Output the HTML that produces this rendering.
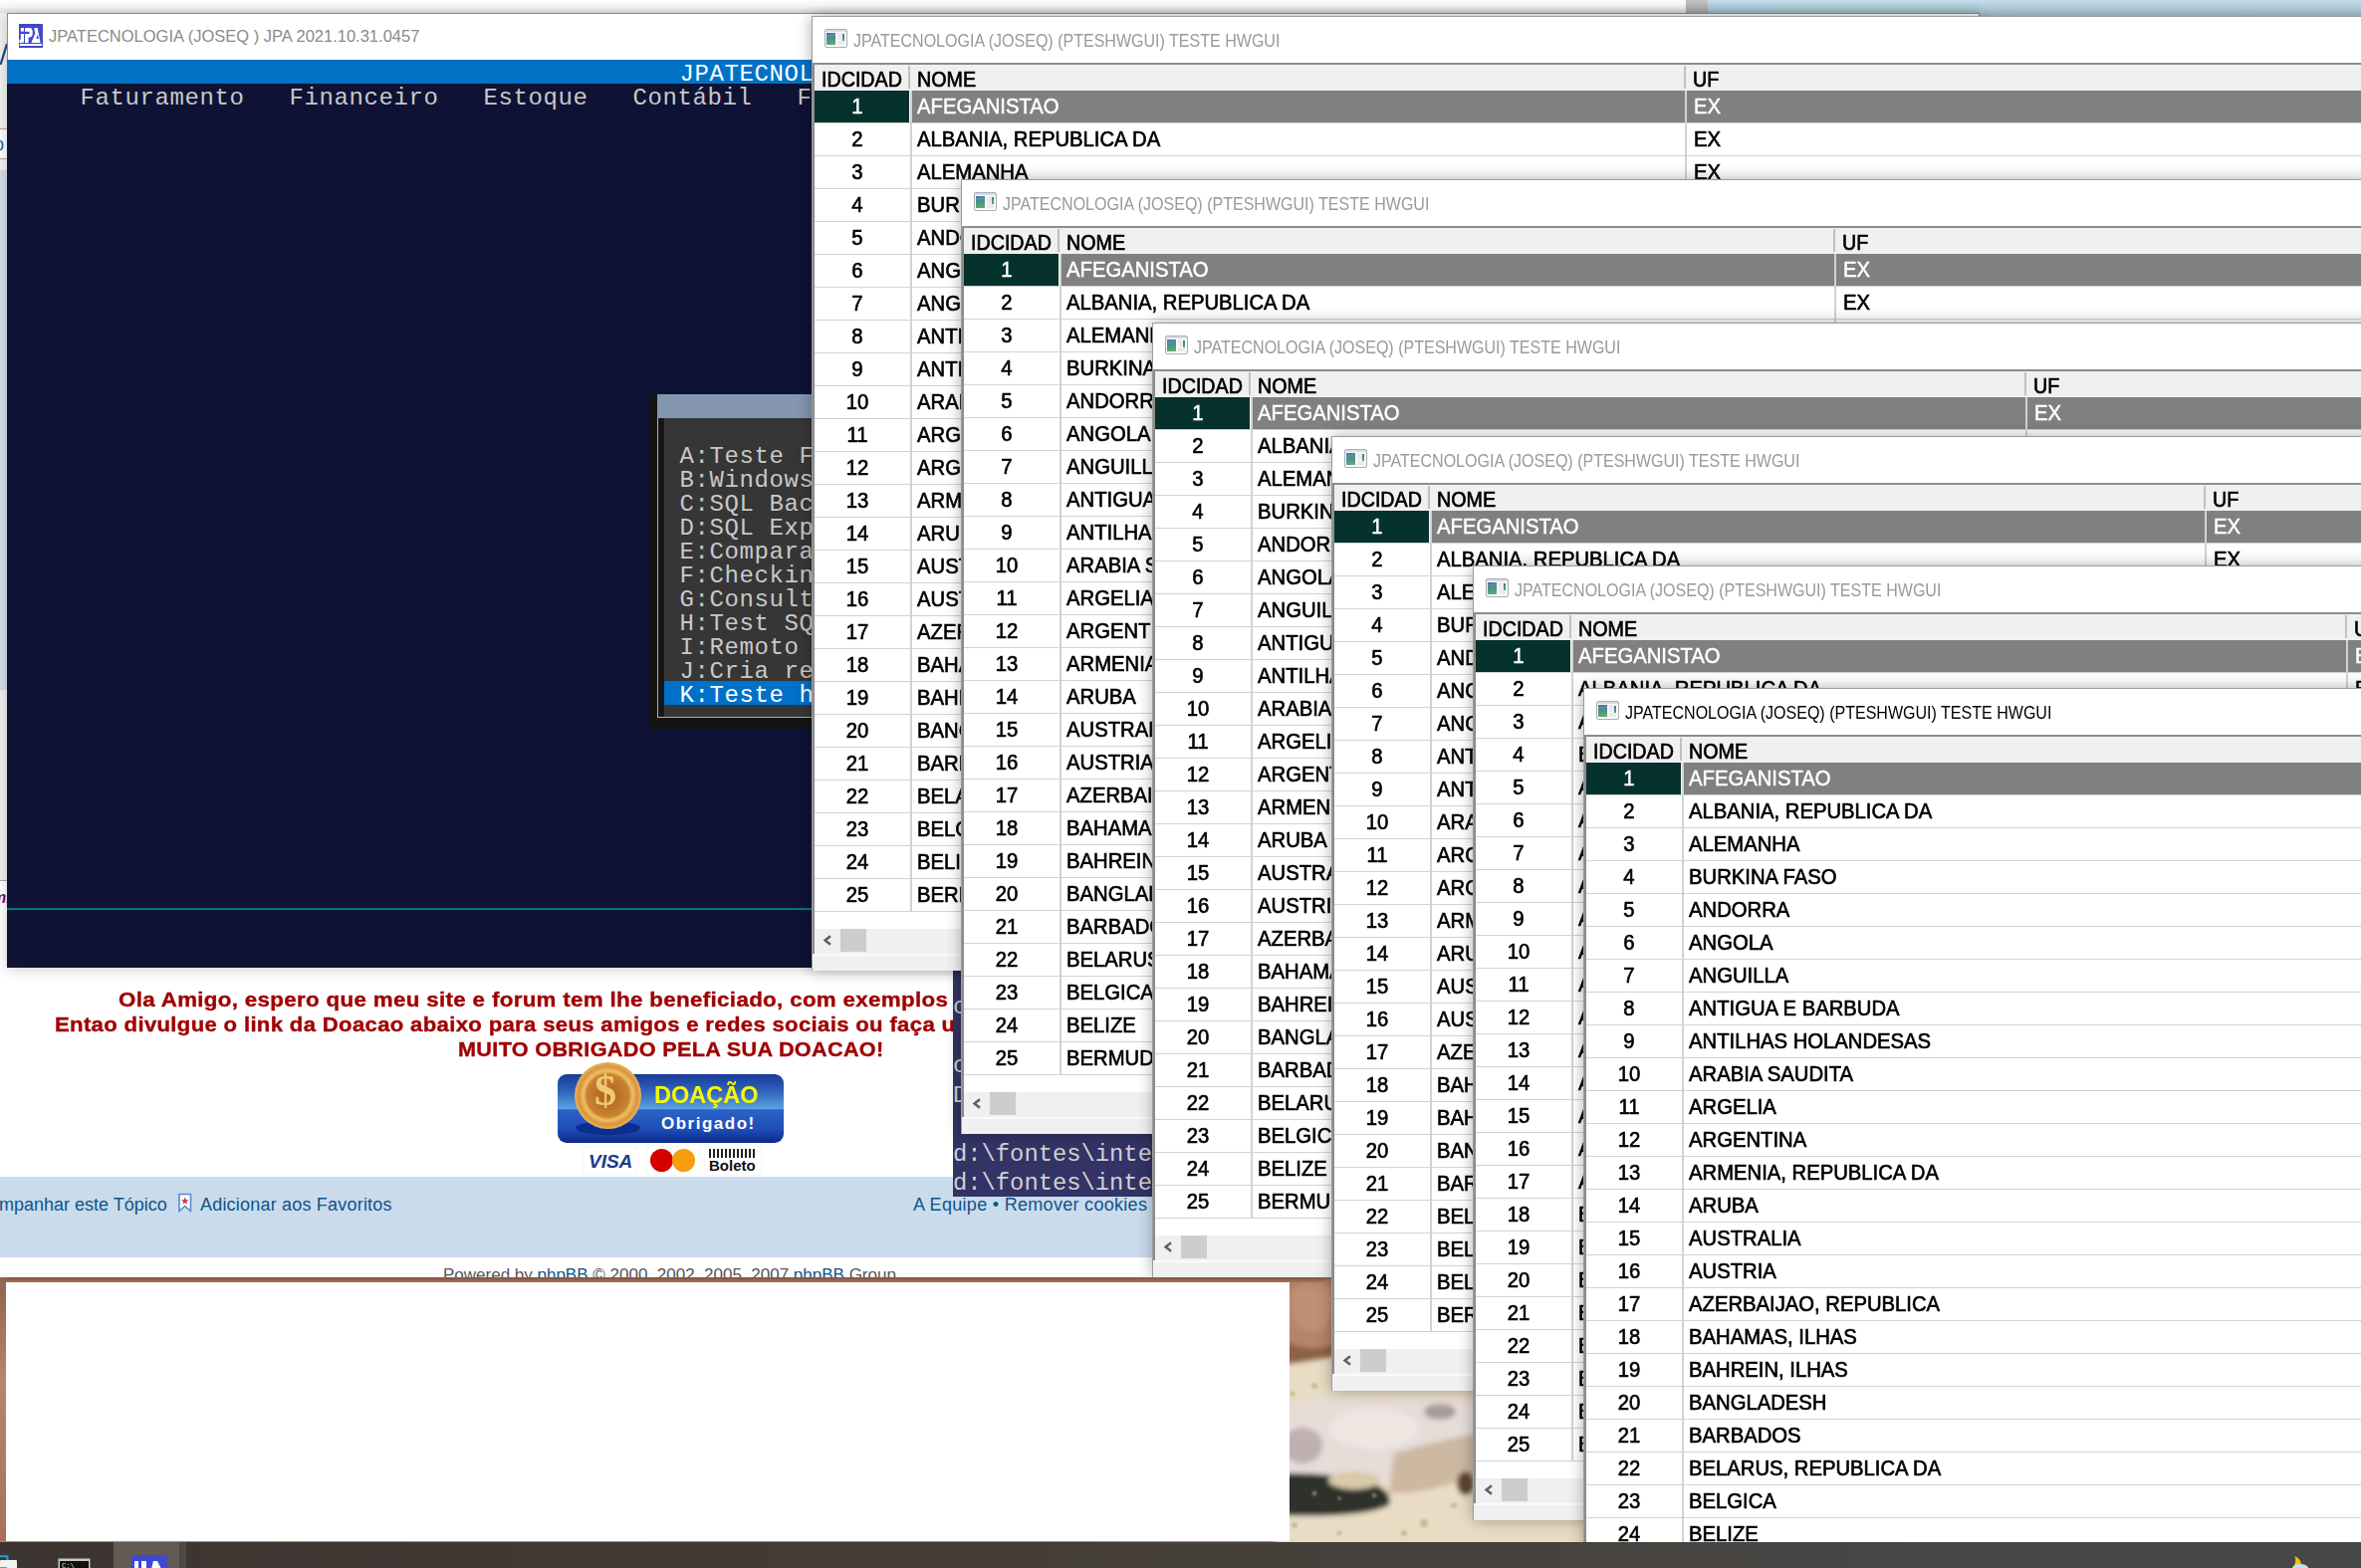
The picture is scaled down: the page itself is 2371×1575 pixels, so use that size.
<!DOCTYPE html><html><head><meta charset="utf-8"><style>
*{margin:0;padding:0;box-sizing:border-box}
html,body{width:2371px;height:1575px;overflow:hidden;background:#f4f4f4}
body{position:relative;font-family:"Liberation Sans",sans-serif}
.a{position:absolute}
.mono{font-family:"Liberation Mono",monospace}
.win{position:absolute;overflow:hidden;background:#f0f0f0}
.win .tb{position:absolute;left:1px;top:1px;right:0;height:46px;background:#fff}
.win .bl{position:absolute;left:0;top:0;width:1px;bottom:0;background:#9c9c9c}
.win .bt{position:absolute;left:0;top:0;height:1px;right:0;background:#9c9c9c}
.win .ttl{position:absolute;left:42px;top:16.5px;font-size:17.5px;line-height:17.5px;color:#9a9a9a;white-space:nowrap;transform:scaleX(0.916);transform-origin:0 0}
.win.act .ttl{color:#000}
.ico{position:absolute;left:12.7px;top:13px;width:23px;height:18.5px;border:1px solid #a9adb4;border-radius:2px;background:linear-gradient(#d8dce4 0,#d8dce4 2px,#fafafa 2px)}
.ico i{position:absolute;left:1.7px;top:3px;width:9px;height:11.6px;background:linear-gradient(170deg,#3d6aa8 0%,#5d90a8 25%,#4a8c8a 40%,#58a078 75%,#62b070 100%)}
.ico u{position:absolute;left:12.5px;top:3px;width:5px;height:6.5px;background:#ebebeb}
.ico s{position:absolute;left:12.5px;top:10.5px;width:7px;height:4px;background:#ebebeb}
.ico b{position:absolute;left:17.3px;top:3.5px;width:1.7px;height:7.5px;background:linear-gradient(#4070c0,#50b050)}
.tbl{position:absolute;left:1px;top:47px;right:0;height:895px;background:#fff;border-top:2px solid #8c8c8c;border-left:2px solid #8c8c8c}
.hdr{position:absolute;left:0;top:0;right:0;height:26px;background:#f0f0f0}
.ht{position:absolute;top:5.2px;font-size:21.5px;line-height:21.5px;color:#000;-webkit-text-stroke:0.7px #000;white-space:nowrap;transform:scaleX(0.915);transform-origin:0 0}
.hs{position:absolute;top:1px;width:2px;height:23px;background:#c0c0c0}
.row{position:absolute;left:0;right:0;height:33px;border-bottom:1px solid #d2d2d2}
.row .id{position:absolute;left:0;width:86px;top:0;height:32px;text-align:center}
.row .nm{position:absolute;left:102.5px;top:0;white-space:nowrap}
.row .uf{position:absolute;left:882.5px;top:0}
.row span{font-size:21.5px;line-height:21.5px;display:block;padding-top:5.5px;color:#000;-webkit-text-stroke:0.65px #000;transform:scaleX(0.942);transform-origin:0 0}
.row .id span{transform-origin:50% 0}
.row .vs{position:absolute;left:95.5px;top:0;width:2px;height:33px;background:#d2d2d2}
.row .vs2{position:absolute;left:874px;top:0;width:2px;height:33px;background:#d2d2d2}
.row.sel .c1{position:absolute;left:0;top:0;width:95px;height:32px;background:#06322d}
.row.sel .c2{position:absolute;left:97.5px;top:0;right:0;height:32px;background:#808080}
.row.sel span{color:#fff;-webkit-text-stroke:0.5px #fff}
.sb{position:absolute;left:0;right:0;top:868px;height:25px;background:#f0f0f0}
.sb .th{position:absolute;left:26px;top:0;width:26px;height:23px;background:#cdcdcd}
.sb .ar{position:absolute;left:8.3px;top:6px;width:10px;height:11px}
</style></head><body><div class="a" style="left:0;top:0;width:2371px;height:1575px;z-index:0;background:#b98564">
<svg width="2371" height="1575" style="position:absolute;left:0;top:0">
<defs>
<radialGradient id="rock" cx="0.45" cy="0.45" r="0.6"><stop offset="0" stop-color="#efe6de"/><stop offset="0.7" stop-color="#d9cfc6"/><stop offset="1" stop-color="#b8aca4"/></radialGradient>
<linearGradient id="sky" x1="0" y1="0" x2="0" y2="1"><stop offset="0" stop-color="#c2dde9"/><stop offset="1" stop-color="#a9c6d3"/></linearGradient>
</defs>

<rect x="1700" y="0" width="671" height="16" fill="url(#sky)"/>
<rect x="0" y="1283" width="1600" height="265" fill="#b98462"/>
<filter id="bl"><feGaussianBlur stdDeviation="2.5"/></filter>
<filter id="bl2"><feGaussianBlur stdDeviation="1.2"/></filter>
<g filter="url(#bl)">
<rect x="1280" y="1283" width="330" height="100" fill="#b6846a"/>
<ellipse cx="1318" cy="1310" rx="22" ry="28" fill="#c08f74"/>
<path d="M1285 1345 Q1315 1360 1340 1350 L1340 1378 L1285 1380Z" fill="#8e6244"/>
<path d="M1280 1372 Q1315 1368 1345 1362 L1610 1385 L1610 1560 L1280 1560Z" fill="#e9dcc4"/>
<path d="M1284 1412 Q1330 1400 1390 1405 Q1450 1402 1485 1410 L1485 1450 Q1460 1470 1430 1480 Q1380 1495 1340 1495 L1284 1492Z" fill="#e6dcd8"/>
<path d="M1400 1460 Q1450 1445 1485 1440 L1485 1480 Q1440 1500 1395 1500Z" fill="#cdb8a2"/>
<ellipse cx="1446" cy="1418" rx="16" ry="8" fill="#a59c9c"/>
<ellipse cx="1308" cy="1452" rx="20" ry="18" fill="#bfb0b2"/>
<ellipse cx="1380" cy="1435" rx="45" ry="20" fill="#efe6e2"/>
<path d="M1284 1480 Q1330 1478 1370 1488 Q1400 1495 1395 1512 Q1370 1525 1284 1522Z" fill="#2d322c"/>
<ellipse cx="1360" cy="1487" rx="26" ry="9" fill="#d9caa8"/>
<ellipse cx="1472" cy="1490" rx="9" ry="12" fill="#5e4434"/>
</g>
<g filter="url(#bl2)" fill="#c4b290" opacity=".8">
<circle cx="1300" cy="1532" r="3"/><circle cx="1430" cy="1530" r="4"/><circle cx="1460" cy="1512" r="3"/><circle cx="1320" cy="1392" r="3"/><circle cx="1298" cy="1400" r="2.5"/><circle cx="1345" cy="1540" r="2.5"/><circle cx="1410" cy="1540" r="3"/>
</g>
<g filter="url(#bl2)" fill="#8c9a80" opacity=".7"><circle cx="1320" cy="1500" r="2.5"/><circle cx="1345" cy="1505" r="2"/><circle cx="1380" cy="1502" r="2.5"/></g>
</svg></div>
<div class="a" style="left:0;top:0;width:1988px;height:1283px;z-index:1;background:#fff;overflow:hidden">
<div class="a" style="left:0;top:0;width:1693px;height:13px;background:linear-gradient(#fefefe 0%,#f6f6f6 50%,#dedede 100%)"></div>
<div class="a" style="left:1693px;top:0;width:22px;height:13px;background:linear-gradient(#c4c4c4,#a8a8a8)"></div>
<div class="a" style="left:1715px;top:0;width:280px;height:13px;background:linear-gradient(#c3dde9,#a6c3d0)"></div>
<div class="a" style="left:0;top:13px;width:7px;height:116px;background:#f1f1f1"></div>
<div class="a" style="left:0;top:129px;width:7px;height:1px;background:#aaa"></div>
<div class="a" style="left:0;top:159px;width:7px;height:1px;background:#aaa"></div>
<svg class="a" style="left:0;top:40px" width="8" height="30"><path d="M7 4 L0.5 25" stroke="#1c4a8c" stroke-width="2.2"/></svg>
<div class="a" style="left:-6px;top:136px;font-size:18px;line-height:18px;color:#2060b0">p</div>
<div class="a" style="left:0;top:160px;width:7px;height:11px;background:#f1f1f1"></div>
<div class="a" style="left:0;top:171px;width:7px;height:522px;background:#d3dde6"></div>
<div class="a" style="left:0;top:693px;width:7px;height:191px;background:#f0f0f0"></div>
<div class="a" style="left:0;top:884px;width:7px;height:1px;background:#aaa"></div>
<div class="a" style="left:-8px;top:894px;font-size:16px;line-height:16px;font-weight:bold;font-style:italic;color:#7a1080">mn</div>
<div class="a" style="left:119.3px;top:994.45px;font-size:20.5px;line-height:20.5px;font-weight:bold;color:#a00000;white-space:nowrap;letter-spacing:0.3px;-webkit-text-stroke:0.35px #a00000;transform:scaleX(1.0896);transform-origin:0 0">Ola Amigo, espero que meu site e forum tem lhe beneficiado, com exemplos de codigos</div>
<div class="a" style="left:55.4px;top:1018.65px;font-size:20.5px;line-height:20.5px;font-weight:bold;color:#a00000;white-space:nowrap;letter-spacing:0.3px;-webkit-text-stroke:0.35px #a00000;transform:scaleX(1.0795);transform-origin:0 0">Entao divulgue o link da Doacao abaixo para seus amigos e redes sociais ou faça uma doacao</div>
<div class="a" style="left:460px;top:1044px;font-size:20.5px;line-height:20.5px;font-weight:bold;color:#a00000;white-space:nowrap;letter-spacing:0.3px;-webkit-text-stroke:0.35px #a00000;transform:scaleX(1.056);transform-origin:0 0">MUITO OBRIGADO PELA SUA DOACAO!</div>
<!-- donate button -->
<div class="a" style="left:560px;top:1079px;width:227px;height:69px;border-radius:9px;background:linear-gradient(#173a98 0%,#2f63bb 25%,#5aa0e0 50%,#2c62c6 52%,#1e4fb8 80%,#0a2888 100%)"></div>
<div class="a" style="left:578px;top:1126px;width:65px;height:14px;border-radius:50%;background:#0a2a8c;opacity:.9"></div>
<div class="a" style="left:577px;top:1067px;width:67px;height:67px;border-radius:50%;background:radial-gradient(circle at 50% 50%,#a8621c 0,#c88232 45%,#f0c060 52%,#d89440 62%,#f8d878 80%,#c08030 100%)"></div>
<div class="a" style="left:597px;top:1074px;font-size:44px;line-height:44px;font-weight:bold;color:#f0c878;font-family:'Liberation Serif',serif">$</div>
<div class="a" style="left:657px;top:1087.5px;font-size:24.5px;line-height:24.5px;font-weight:bold;color:#f8f800;letter-spacing:0px;transform:scaleX(0.96);transform-origin:0 0">DOAÇÃO</div>
<div class="a" style="left:664px;top:1119.5px;font-size:17px;line-height:17px;font-weight:bold;color:#fff;letter-spacing:1.5px">Obrigado!</div>
<div class="a" style="left:586px;top:1152px;width:54px;height:28px;background:#fff;border-radius:3px;box-shadow:0 0 1px #bbb"></div>
<div class="a" style="left:591px;top:1157px;font-size:19px;line-height:19px;font-weight:bold;font-style:italic;color:#1a3a8c">VISA</div>
<div class="a" style="left:650px;top:1152px;width:53px;height:28px;background:#fff;border-radius:3px;box-shadow:0 0 1px #bbb"></div>
<div class="a" style="left:653px;top:1154px;width:23px;height:23px;border-radius:50%;background:#d40000"></div>
<div class="a" style="left:675px;top:1154px;width:23px;height:23px;border-radius:50%;background:#f89c10"></div>
<div class="a" style="left:708px;top:1152px;width:56px;height:28px;background:#fff;border-radius:3px;box-shadow:0 0 1px #bbb"></div>
<div class="a" style="left:712px;top:1154px;width:48px;height:9px;background:repeating-linear-gradient(90deg,#222 0 2px,#fff 2px 4px)"></div>
<div class="a" style="left:712px;top:1163px;font-size:15px;line-height:15px;font-weight:bold;color:#111">Boleto</div>
<!-- footer bar -->
<div class="a" style="left:0;top:1182px;width:1990px;height:81px;background:#cadcec"></div>
<div class="a" style="left:-1px;top:1201px;font-size:18px;line-height:18px;color:#105289;white-space:nowrap;letter-spacing:0px">mpanhar este Tópico</div>
<svg class="a" style="left:178px;top:1198px" width="16" height="20"><path d="M2 1.5H13.5V18.5L7.75 13.5L2 18.5Z" fill="#fff" stroke="#5a8ad0" stroke-width="1.6"/><path d="M7.75 4.5L8.8 7.3H11.6L9.3 9L10.2 11.8L7.75 10.1L5.3 11.8L6.2 9L3.9 7.3H6.7Z" fill="#c83048"/></svg>
<div class="a" style="left:201px;top:1201px;font-size:18px;line-height:18px;color:#105289;white-space:nowrap;letter-spacing:0.2px">Adicionar aos Favoritos</div>
<div class="a" style="left:917px;top:1200.5px;font-size:18px;line-height:18px;color:#105289;white-space:nowrap;letter-spacing:0.3px">A Equipe • Remover cookies</div>
<div class="a" style="left:445px;top:1271.5px;font-size:17px;line-height:17px;color:#555;white-space:nowrap">Powered by <span style="color:#105289">phpBB</span> © 2000, 2002, 2005, 2007 <span style="color:#105289">phpBB</span> Group</div>
</div>
<div class="a" style="left:0;top:1283px;width:1337px;height:5px;z-index:30;background:linear-gradient(#7e5440,#a87058)"></div><div class="a" style="left:0;top:1283px;width:6px;height:265px;z-index:30;background:linear-gradient(#8e6450,#b8846c 40%,#a87058)"></div><div class="a" style="left:6px;top:1288px;width:1289px;height:260px;background:#fff;z-index:30"></div>
<div class="a mono" style="left:957px;top:975px;width:260px;height:227px;background:#333366;z-index:3;overflow:hidden;color:#d0d0d0;font-size:23.8px;line-height:29.5px;white-space:pre">
<div class="a" style="left:0;top:22px">c</div>
<div class="a" style="left:0;top:81px">c</div>
<div class="a" style="left:0;top:110.5px">D</div>
<div class="a" style="left:0;top:169.5px">d:\fontes\integra</div>
<div class="a" style="left:0;top:199px">d:\fontes\integra</div>
</div>
<div class="a" style="left:7px;top:13px;width:1981px;height:959px;z-index:4;background:#0e1235;box-shadow:0 2px 12px rgba(0,0,0,.2);overflow:hidden"><div class="a" style="left:0;top:0;width:100%;height:47px;background:#fff;border:1px solid #8e8e8e;border-bottom:0"></div><svg class="a" style="left:12px;top:11px" width="24" height="24" viewBox="0 0 24 24"><rect width="24" height="24" fill="#3f48cc"/><path d="M1.8 4H5V7.8H1.8Z M1.8 10H5V17.5Q5 19 3.5 19H0.4V15.8H1.8Z M6 4H11Q13.8 4 13.8 8.6Q13.8 13.4 11 13.4H9.6V19H6Z" fill="#fff"/><rect x="0" y="7.8" width="10.5" height="2.2" fill="#3f48cc"/><path d="M15.2 4H18.7L21.6 19H12.4L16.3 9.8Z" fill="#fff"/><path d="M18.7 10.6L17.4 15H19.9Z" fill="#3f48cc"/><rect x="0.7" y="20" width="22.3" height="2" fill="#fff"/></svg><div class="a" style="left:42px;top:15px;font-size:16.5px;line-height:16.5px;color:#8a8a8a;white-space:nowrap">JPATECNOLOGIA (JOSEQ ) JPA 2021.10.31.0457</div><div class="a" style="left:0;top:47px;width:100%;height:24px;background:#0072c6"></div><div class="a" style="left:0;top:899px;width:100%;height:2px;background:#007878"></div><div class="a mono" style="left:675.5px;top:49.5px;font-size:24px;line-height:24px;letter-spacing:0.6px;color:#fff;white-space:pre">JPATECNOLOGIA</div><div class="a mono" style="left:73.5px;top:73.5px;font-size:24px;line-height:24px;letter-spacing:0.6px;color:#c8c8c8;white-space:pre">Faturamento   Financeiro   Estoque   Contábil   Fiscal</div><div class="a" style="left:645px;top:383px;width:400px;height:336px;background:#141414"></div><div class="a" style="left:652.5px;top:383px;width:400px;height:24px;background:#8496b0"></div><div class="a" style="left:652.5px;top:407px;width:400px;height:301px;background:#363636;border-left:1px solid #b8b0a0;border-bottom:1px solid #b8b0a0"></div><div class="a" style="left:654px;top:407px;width:6px;height:300px;background:#161616"></div><div class="a mono" style="left:675.5px;top:433.5px;font-size:24px;line-height:24px;letter-spacing:0.6px;color:#c8c8c8;white-space:pre">A:Teste Firebird</div><div class="a mono" style="left:675.5px;top:457.5px;font-size:24px;line-height:24px;letter-spacing:0.6px;color:#c8c8c8;white-space:pre">B:Windows Update</div><div class="a mono" style="left:675.5px;top:481.5px;font-size:24px;line-height:24px;letter-spacing:0.6px;color:#c8c8c8;white-space:pre">C:SQL Backup</div><div class="a mono" style="left:675.5px;top:505.5px;font-size:24px;line-height:24px;letter-spacing:0.6px;color:#c8c8c8;white-space:pre">D:SQL Express</div><div class="a mono" style="left:675.5px;top:529.5px;font-size:24px;line-height:24px;letter-spacing:0.6px;color:#c8c8c8;white-space:pre">E:Comparacao</div><div class="a mono" style="left:675.5px;top:553.5px;font-size:24px;line-height:24px;letter-spacing:0.6px;color:#c8c8c8;white-space:pre">F:Checking</div><div class="a mono" style="left:675.5px;top:577.5px;font-size:24px;line-height:24px;letter-spacing:0.6px;color:#c8c8c8;white-space:pre">G:Consulta</div><div class="a mono" style="left:675.5px;top:601.5px;font-size:24px;line-height:24px;letter-spacing:0.6px;color:#c8c8c8;white-space:pre">H:Test SQL</div><div class="a mono" style="left:675.5px;top:625.5px;font-size:24px;line-height:24px;letter-spacing:0.6px;color:#c8c8c8;white-space:pre">I:Remoto</div><div class="a mono" style="left:675.5px;top:649.5px;font-size:24px;line-height:24px;letter-spacing:0.6px;color:#c8c8c8;white-space:pre">J:Cria relatorio</div><div class="a" style="left:660px;top:671px;width:400px;height:24px;background:#0070c8"></div><div class="a mono" style="left:675.5px;top:673.5px;font-size:24px;line-height:24px;letter-spacing:0.6px;color:#ffffff;white-space:pre">K:Teste hwgui</div></div>
<div class="win" style="left:815px;top:16px;width:1566px;height:959px;z-index:10;box-shadow:0 0 14px rgba(0,0,0,.32)"><div class="tb"></div><div class="bl"></div><div class="bt"></div><div class="ico"><i></i><u></u><s></s><b></b></div><div class="ttl">JPATECNOLOGIA (JOSEQ) (PTESHWGUI) TESTE HWGUI</div><div class="tbl"><div class="hdr"><div class="ht" style="left:7px">IDCIDAD</div><div class="hs" style="left:94px"></div><div class="ht" style="left:103px">NOME</div><div class="hs" style="left:872.5px"></div><div class="ht" style="left:882px">UF</div></div><div class="row sel" style="top:26px"><div class="c1"></div><div class="c2"></div><div class="vs"></div><div class="vs2"></div><div class="id"><span>1</span></div><div class="nm"><span>AFEGANISTAO</span></div><div class="uf"><span>EX</span></div></div><div class="row" style="top:59px"><div class="vs"></div><div class="vs2"></div><div class="id"><span>2</span></div><div class="nm"><span>ALBANIA, REPUBLICA DA</span></div><div class="uf"><span>EX</span></div></div><div class="row" style="top:92px"><div class="vs"></div><div class="vs2"></div><div class="id"><span>3</span></div><div class="nm"><span>ALEMANHA</span></div><div class="uf"><span>EX</span></div></div><div class="row" style="top:125px"><div class="vs"></div><div class="vs2"></div><div class="id"><span>4</span></div><div class="nm"><span>BURKINA FASO</span></div><div class="uf"><span>EX</span></div></div><div class="row" style="top:158px"><div class="vs"></div><div class="vs2"></div><div class="id"><span>5</span></div><div class="nm"><span>ANDORRA</span></div><div class="uf"><span>EX</span></div></div><div class="row" style="top:191px"><div class="vs"></div><div class="vs2"></div><div class="id"><span>6</span></div><div class="nm"><span>ANGOLA</span></div><div class="uf"><span>EX</span></div></div><div class="row" style="top:224px"><div class="vs"></div><div class="vs2"></div><div class="id"><span>7</span></div><div class="nm"><span>ANGUILLA</span></div><div class="uf"><span>EX</span></div></div><div class="row" style="top:257px"><div class="vs"></div><div class="vs2"></div><div class="id"><span>8</span></div><div class="nm"><span>ANTIGUA E BARBUDA</span></div><div class="uf"><span>EX</span></div></div><div class="row" style="top:290px"><div class="vs"></div><div class="vs2"></div><div class="id"><span>9</span></div><div class="nm"><span>ANTILHAS HOLANDESAS</span></div><div class="uf"><span>EX</span></div></div><div class="row" style="top:323px"><div class="vs"></div><div class="vs2"></div><div class="id"><span>10</span></div><div class="nm"><span>ARABIA SAUDITA</span></div><div class="uf"><span>EX</span></div></div><div class="row" style="top:356px"><div class="vs"></div><div class="vs2"></div><div class="id"><span>11</span></div><div class="nm"><span>ARGELIA</span></div><div class="uf"><span>EX</span></div></div><div class="row" style="top:389px"><div class="vs"></div><div class="vs2"></div><div class="id"><span>12</span></div><div class="nm"><span>ARGENTINA</span></div><div class="uf"><span>EX</span></div></div><div class="row" style="top:422px"><div class="vs"></div><div class="vs2"></div><div class="id"><span>13</span></div><div class="nm"><span>ARMENIA, REPUBLICA DA</span></div><div class="uf"><span>EX</span></div></div><div class="row" style="top:455px"><div class="vs"></div><div class="vs2"></div><div class="id"><span>14</span></div><div class="nm"><span>ARUBA</span></div><div class="uf"><span>EX</span></div></div><div class="row" style="top:488px"><div class="vs"></div><div class="vs2"></div><div class="id"><span>15</span></div><div class="nm"><span>AUSTRALIA</span></div><div class="uf"><span>EX</span></div></div><div class="row" style="top:521px"><div class="vs"></div><div class="vs2"></div><div class="id"><span>16</span></div><div class="nm"><span>AUSTRIA</span></div><div class="uf"><span>EX</span></div></div><div class="row" style="top:554px"><div class="vs"></div><div class="vs2"></div><div class="id"><span>17</span></div><div class="nm"><span>AZERBAIJAO, REPUBLICA</span></div><div class="uf"><span>EX</span></div></div><div class="row" style="top:587px"><div class="vs"></div><div class="vs2"></div><div class="id"><span>18</span></div><div class="nm"><span>BAHAMAS, ILHAS</span></div><div class="uf"><span>EX</span></div></div><div class="row" style="top:620px"><div class="vs"></div><div class="vs2"></div><div class="id"><span>19</span></div><div class="nm"><span>BAHREIN, ILHAS</span></div><div class="uf"><span>EX</span></div></div><div class="row" style="top:653px"><div class="vs"></div><div class="vs2"></div><div class="id"><span>20</span></div><div class="nm"><span>BANGLADESH</span></div><div class="uf"><span>EX</span></div></div><div class="row" style="top:686px"><div class="vs"></div><div class="vs2"></div><div class="id"><span>21</span></div><div class="nm"><span>BARBADOS</span></div><div class="uf"><span>EX</span></div></div><div class="row" style="top:719px"><div class="vs"></div><div class="vs2"></div><div class="id"><span>22</span></div><div class="nm"><span>BELARUS, REPUBLICA DA</span></div><div class="uf"><span>EX</span></div></div><div class="row" style="top:752px"><div class="vs"></div><div class="vs2"></div><div class="id"><span>23</span></div><div class="nm"><span>BELGICA</span></div><div class="uf"><span>EX</span></div></div><div class="row" style="top:785px"><div class="vs"></div><div class="vs2"></div><div class="id"><span>24</span></div><div class="nm"><span>BELIZE</span></div><div class="uf"><span>EX</span></div></div><div class="row" style="top:818px"><div class="vs"></div><div class="vs2"></div><div class="id"><span>25</span></div><div class="nm"><span>BERMUDAS</span></div><div class="uf"><span>EX</span></div></div><div class="a" style="left:-2px;right:0;top:893px;height:2px;background:#fbfbfb"></div><div class="sb"><svg class="ar" viewBox="0 0 10 11"><path d="M8 1.2 L2.6 5.5 L8 9.8" fill="none" stroke="#606060" stroke-width="2.5"/></svg><div class="th"></div></div></div></div>
<div class="win" style="left:965px;top:180px;width:1416px;height:959px;z-index:11;box-shadow:0 0 14px rgba(0,0,0,.32)"><div class="tb"></div><div class="bl"></div><div class="bt"></div><div class="ico"><i></i><u></u><s></s><b></b></div><div class="ttl">JPATECNOLOGIA (JOSEQ) (PTESHWGUI) TESTE HWGUI</div><div class="tbl"><div class="hdr"><div class="ht" style="left:7px">IDCIDAD</div><div class="hs" style="left:94px"></div><div class="ht" style="left:103px">NOME</div><div class="hs" style="left:872.5px"></div><div class="ht" style="left:882px">UF</div></div><div class="row sel" style="top:26px"><div class="c1"></div><div class="c2"></div><div class="vs"></div><div class="vs2"></div><div class="id"><span>1</span></div><div class="nm"><span>AFEGANISTAO</span></div><div class="uf"><span>EX</span></div></div><div class="row" style="top:59px"><div class="vs"></div><div class="vs2"></div><div class="id"><span>2</span></div><div class="nm"><span>ALBANIA, REPUBLICA DA</span></div><div class="uf"><span>EX</span></div></div><div class="row" style="top:92px"><div class="vs"></div><div class="vs2"></div><div class="id"><span>3</span></div><div class="nm"><span>ALEMANHA</span></div><div class="uf"><span>EX</span></div></div><div class="row" style="top:125px"><div class="vs"></div><div class="vs2"></div><div class="id"><span>4</span></div><div class="nm"><span>BURKINA FASO</span></div><div class="uf"><span>EX</span></div></div><div class="row" style="top:158px"><div class="vs"></div><div class="vs2"></div><div class="id"><span>5</span></div><div class="nm"><span>ANDORRA</span></div><div class="uf"><span>EX</span></div></div><div class="row" style="top:191px"><div class="vs"></div><div class="vs2"></div><div class="id"><span>6</span></div><div class="nm"><span>ANGOLA</span></div><div class="uf"><span>EX</span></div></div><div class="row" style="top:224px"><div class="vs"></div><div class="vs2"></div><div class="id"><span>7</span></div><div class="nm"><span>ANGUILLA</span></div><div class="uf"><span>EX</span></div></div><div class="row" style="top:257px"><div class="vs"></div><div class="vs2"></div><div class="id"><span>8</span></div><div class="nm"><span>ANTIGUA E BARBUDA</span></div><div class="uf"><span>EX</span></div></div><div class="row" style="top:290px"><div class="vs"></div><div class="vs2"></div><div class="id"><span>9</span></div><div class="nm"><span>ANTILHAS HOLANDESAS</span></div><div class="uf"><span>EX</span></div></div><div class="row" style="top:323px"><div class="vs"></div><div class="vs2"></div><div class="id"><span>10</span></div><div class="nm"><span>ARABIA SAUDITA</span></div><div class="uf"><span>EX</span></div></div><div class="row" style="top:356px"><div class="vs"></div><div class="vs2"></div><div class="id"><span>11</span></div><div class="nm"><span>ARGELIA</span></div><div class="uf"><span>EX</span></div></div><div class="row" style="top:389px"><div class="vs"></div><div class="vs2"></div><div class="id"><span>12</span></div><div class="nm"><span>ARGENTINA</span></div><div class="uf"><span>EX</span></div></div><div class="row" style="top:422px"><div class="vs"></div><div class="vs2"></div><div class="id"><span>13</span></div><div class="nm"><span>ARMENIA, REPUBLICA DA</span></div><div class="uf"><span>EX</span></div></div><div class="row" style="top:455px"><div class="vs"></div><div class="vs2"></div><div class="id"><span>14</span></div><div class="nm"><span>ARUBA</span></div><div class="uf"><span>EX</span></div></div><div class="row" style="top:488px"><div class="vs"></div><div class="vs2"></div><div class="id"><span>15</span></div><div class="nm"><span>AUSTRALIA</span></div><div class="uf"><span>EX</span></div></div><div class="row" style="top:521px"><div class="vs"></div><div class="vs2"></div><div class="id"><span>16</span></div><div class="nm"><span>AUSTRIA</span></div><div class="uf"><span>EX</span></div></div><div class="row" style="top:554px"><div class="vs"></div><div class="vs2"></div><div class="id"><span>17</span></div><div class="nm"><span>AZERBAIJAO, REPUBLICA</span></div><div class="uf"><span>EX</span></div></div><div class="row" style="top:587px"><div class="vs"></div><div class="vs2"></div><div class="id"><span>18</span></div><div class="nm"><span>BAHAMAS, ILHAS</span></div><div class="uf"><span>EX</span></div></div><div class="row" style="top:620px"><div class="vs"></div><div class="vs2"></div><div class="id"><span>19</span></div><div class="nm"><span>BAHREIN, ILHAS</span></div><div class="uf"><span>EX</span></div></div><div class="row" style="top:653px"><div class="vs"></div><div class="vs2"></div><div class="id"><span>20</span></div><div class="nm"><span>BANGLADESH</span></div><div class="uf"><span>EX</span></div></div><div class="row" style="top:686px"><div class="vs"></div><div class="vs2"></div><div class="id"><span>21</span></div><div class="nm"><span>BARBADOS</span></div><div class="uf"><span>EX</span></div></div><div class="row" style="top:719px"><div class="vs"></div><div class="vs2"></div><div class="id"><span>22</span></div><div class="nm"><span>BELARUS, REPUBLICA DA</span></div><div class="uf"><span>EX</span></div></div><div class="row" style="top:752px"><div class="vs"></div><div class="vs2"></div><div class="id"><span>23</span></div><div class="nm"><span>BELGICA</span></div><div class="uf"><span>EX</span></div></div><div class="row" style="top:785px"><div class="vs"></div><div class="vs2"></div><div class="id"><span>24</span></div><div class="nm"><span>BELIZE</span></div><div class="uf"><span>EX</span></div></div><div class="row" style="top:818px"><div class="vs"></div><div class="vs2"></div><div class="id"><span>25</span></div><div class="nm"><span>BERMUDAS</span></div><div class="uf"><span>EX</span></div></div><div class="a" style="left:-2px;right:0;top:893px;height:2px;background:#fbfbfb"></div><div class="sb"><svg class="ar" viewBox="0 0 10 11"><path d="M8 1.2 L2.6 5.5 L8 9.8" fill="none" stroke="#606060" stroke-width="2.5"/></svg><div class="th"></div></div></div></div>
<div class="win" style="left:1157px;top:324px;width:1224px;height:959px;z-index:12;box-shadow:0 0 14px rgba(0,0,0,.32)"><div class="tb"></div><div class="bl"></div><div class="bt"></div><div class="ico"><i></i><u></u><s></s><b></b></div><div class="ttl">JPATECNOLOGIA (JOSEQ) (PTESHWGUI) TESTE HWGUI</div><div class="tbl"><div class="hdr"><div class="ht" style="left:7px">IDCIDAD</div><div class="hs" style="left:94px"></div><div class="ht" style="left:103px">NOME</div><div class="hs" style="left:872.5px"></div><div class="ht" style="left:882px">UF</div></div><div class="row sel" style="top:26px"><div class="c1"></div><div class="c2"></div><div class="vs"></div><div class="vs2"></div><div class="id"><span>1</span></div><div class="nm"><span>AFEGANISTAO</span></div><div class="uf"><span>EX</span></div></div><div class="row" style="top:59px"><div class="vs"></div><div class="vs2"></div><div class="id"><span>2</span></div><div class="nm"><span>ALBANIA, REPUBLICA DA</span></div><div class="uf"><span>EX</span></div></div><div class="row" style="top:92px"><div class="vs"></div><div class="vs2"></div><div class="id"><span>3</span></div><div class="nm"><span>ALEMANHA</span></div><div class="uf"><span>EX</span></div></div><div class="row" style="top:125px"><div class="vs"></div><div class="vs2"></div><div class="id"><span>4</span></div><div class="nm"><span>BURKINA FASO</span></div><div class="uf"><span>EX</span></div></div><div class="row" style="top:158px"><div class="vs"></div><div class="vs2"></div><div class="id"><span>5</span></div><div class="nm"><span>ANDORRA</span></div><div class="uf"><span>EX</span></div></div><div class="row" style="top:191px"><div class="vs"></div><div class="vs2"></div><div class="id"><span>6</span></div><div class="nm"><span>ANGOLA</span></div><div class="uf"><span>EX</span></div></div><div class="row" style="top:224px"><div class="vs"></div><div class="vs2"></div><div class="id"><span>7</span></div><div class="nm"><span>ANGUILLA</span></div><div class="uf"><span>EX</span></div></div><div class="row" style="top:257px"><div class="vs"></div><div class="vs2"></div><div class="id"><span>8</span></div><div class="nm"><span>ANTIGUA E BARBUDA</span></div><div class="uf"><span>EX</span></div></div><div class="row" style="top:290px"><div class="vs"></div><div class="vs2"></div><div class="id"><span>9</span></div><div class="nm"><span>ANTILHAS HOLANDESAS</span></div><div class="uf"><span>EX</span></div></div><div class="row" style="top:323px"><div class="vs"></div><div class="vs2"></div><div class="id"><span>10</span></div><div class="nm"><span>ARABIA SAUDITA</span></div><div class="uf"><span>EX</span></div></div><div class="row" style="top:356px"><div class="vs"></div><div class="vs2"></div><div class="id"><span>11</span></div><div class="nm"><span>ARGELIA</span></div><div class="uf"><span>EX</span></div></div><div class="row" style="top:389px"><div class="vs"></div><div class="vs2"></div><div class="id"><span>12</span></div><div class="nm"><span>ARGENTINA</span></div><div class="uf"><span>EX</span></div></div><div class="row" style="top:422px"><div class="vs"></div><div class="vs2"></div><div class="id"><span>13</span></div><div class="nm"><span>ARMENIA, REPUBLICA DA</span></div><div class="uf"><span>EX</span></div></div><div class="row" style="top:455px"><div class="vs"></div><div class="vs2"></div><div class="id"><span>14</span></div><div class="nm"><span>ARUBA</span></div><div class="uf"><span>EX</span></div></div><div class="row" style="top:488px"><div class="vs"></div><div class="vs2"></div><div class="id"><span>15</span></div><div class="nm"><span>AUSTRALIA</span></div><div class="uf"><span>EX</span></div></div><div class="row" style="top:521px"><div class="vs"></div><div class="vs2"></div><div class="id"><span>16</span></div><div class="nm"><span>AUSTRIA</span></div><div class="uf"><span>EX</span></div></div><div class="row" style="top:554px"><div class="vs"></div><div class="vs2"></div><div class="id"><span>17</span></div><div class="nm"><span>AZERBAIJAO, REPUBLICA</span></div><div class="uf"><span>EX</span></div></div><div class="row" style="top:587px"><div class="vs"></div><div class="vs2"></div><div class="id"><span>18</span></div><div class="nm"><span>BAHAMAS, ILHAS</span></div><div class="uf"><span>EX</span></div></div><div class="row" style="top:620px"><div class="vs"></div><div class="vs2"></div><div class="id"><span>19</span></div><div class="nm"><span>BAHREIN, ILHAS</span></div><div class="uf"><span>EX</span></div></div><div class="row" style="top:653px"><div class="vs"></div><div class="vs2"></div><div class="id"><span>20</span></div><div class="nm"><span>BANGLADESH</span></div><div class="uf"><span>EX</span></div></div><div class="row" style="top:686px"><div class="vs"></div><div class="vs2"></div><div class="id"><span>21</span></div><div class="nm"><span>BARBADOS</span></div><div class="uf"><span>EX</span></div></div><div class="row" style="top:719px"><div class="vs"></div><div class="vs2"></div><div class="id"><span>22</span></div><div class="nm"><span>BELARUS, REPUBLICA DA</span></div><div class="uf"><span>EX</span></div></div><div class="row" style="top:752px"><div class="vs"></div><div class="vs2"></div><div class="id"><span>23</span></div><div class="nm"><span>BELGICA</span></div><div class="uf"><span>EX</span></div></div><div class="row" style="top:785px"><div class="vs"></div><div class="vs2"></div><div class="id"><span>24</span></div><div class="nm"><span>BELIZE</span></div><div class="uf"><span>EX</span></div></div><div class="row" style="top:818px"><div class="vs"></div><div class="vs2"></div><div class="id"><span>25</span></div><div class="nm"><span>BERMUDAS</span></div><div class="uf"><span>EX</span></div></div><div class="a" style="left:-2px;right:0;top:893px;height:2px;background:#fbfbfb"></div><div class="sb"><svg class="ar" viewBox="0 0 10 11"><path d="M8 1.2 L2.6 5.5 L8 9.8" fill="none" stroke="#606060" stroke-width="2.5"/></svg><div class="th"></div></div></div></div>
<div class="win" style="left:1337px;top:438px;width:1044px;height:959px;z-index:13;box-shadow:0 0 14px rgba(0,0,0,.32)"><div class="tb"></div><div class="bl"></div><div class="bt"></div><div class="ico"><i></i><u></u><s></s><b></b></div><div class="ttl">JPATECNOLOGIA (JOSEQ) (PTESHWGUI) TESTE HWGUI</div><div class="tbl"><div class="hdr"><div class="ht" style="left:7px">IDCIDAD</div><div class="hs" style="left:94px"></div><div class="ht" style="left:103px">NOME</div><div class="hs" style="left:872.5px"></div><div class="ht" style="left:882px">UF</div></div><div class="row sel" style="top:26px"><div class="c1"></div><div class="c2"></div><div class="vs"></div><div class="vs2"></div><div class="id"><span>1</span></div><div class="nm"><span>AFEGANISTAO</span></div><div class="uf"><span>EX</span></div></div><div class="row" style="top:59px"><div class="vs"></div><div class="vs2"></div><div class="id"><span>2</span></div><div class="nm"><span>ALBANIA, REPUBLICA DA</span></div><div class="uf"><span>EX</span></div></div><div class="row" style="top:92px"><div class="vs"></div><div class="vs2"></div><div class="id"><span>3</span></div><div class="nm"><span>ALEMANHA</span></div><div class="uf"><span>EX</span></div></div><div class="row" style="top:125px"><div class="vs"></div><div class="vs2"></div><div class="id"><span>4</span></div><div class="nm"><span>BURKINA FASO</span></div><div class="uf"><span>EX</span></div></div><div class="row" style="top:158px"><div class="vs"></div><div class="vs2"></div><div class="id"><span>5</span></div><div class="nm"><span>ANDORRA</span></div><div class="uf"><span>EX</span></div></div><div class="row" style="top:191px"><div class="vs"></div><div class="vs2"></div><div class="id"><span>6</span></div><div class="nm"><span>ANGOLA</span></div><div class="uf"><span>EX</span></div></div><div class="row" style="top:224px"><div class="vs"></div><div class="vs2"></div><div class="id"><span>7</span></div><div class="nm"><span>ANGUILLA</span></div><div class="uf"><span>EX</span></div></div><div class="row" style="top:257px"><div class="vs"></div><div class="vs2"></div><div class="id"><span>8</span></div><div class="nm"><span>ANTIGUA E BARBUDA</span></div><div class="uf"><span>EX</span></div></div><div class="row" style="top:290px"><div class="vs"></div><div class="vs2"></div><div class="id"><span>9</span></div><div class="nm"><span>ANTILHAS HOLANDESAS</span></div><div class="uf"><span>EX</span></div></div><div class="row" style="top:323px"><div class="vs"></div><div class="vs2"></div><div class="id"><span>10</span></div><div class="nm"><span>ARABIA SAUDITA</span></div><div class="uf"><span>EX</span></div></div><div class="row" style="top:356px"><div class="vs"></div><div class="vs2"></div><div class="id"><span>11</span></div><div class="nm"><span>ARGELIA</span></div><div class="uf"><span>EX</span></div></div><div class="row" style="top:389px"><div class="vs"></div><div class="vs2"></div><div class="id"><span>12</span></div><div class="nm"><span>ARGENTINA</span></div><div class="uf"><span>EX</span></div></div><div class="row" style="top:422px"><div class="vs"></div><div class="vs2"></div><div class="id"><span>13</span></div><div class="nm"><span>ARMENIA, REPUBLICA DA</span></div><div class="uf"><span>EX</span></div></div><div class="row" style="top:455px"><div class="vs"></div><div class="vs2"></div><div class="id"><span>14</span></div><div class="nm"><span>ARUBA</span></div><div class="uf"><span>EX</span></div></div><div class="row" style="top:488px"><div class="vs"></div><div class="vs2"></div><div class="id"><span>15</span></div><div class="nm"><span>AUSTRALIA</span></div><div class="uf"><span>EX</span></div></div><div class="row" style="top:521px"><div class="vs"></div><div class="vs2"></div><div class="id"><span>16</span></div><div class="nm"><span>AUSTRIA</span></div><div class="uf"><span>EX</span></div></div><div class="row" style="top:554px"><div class="vs"></div><div class="vs2"></div><div class="id"><span>17</span></div><div class="nm"><span>AZERBAIJAO, REPUBLICA</span></div><div class="uf"><span>EX</span></div></div><div class="row" style="top:587px"><div class="vs"></div><div class="vs2"></div><div class="id"><span>18</span></div><div class="nm"><span>BAHAMAS, ILHAS</span></div><div class="uf"><span>EX</span></div></div><div class="row" style="top:620px"><div class="vs"></div><div class="vs2"></div><div class="id"><span>19</span></div><div class="nm"><span>BAHREIN, ILHAS</span></div><div class="uf"><span>EX</span></div></div><div class="row" style="top:653px"><div class="vs"></div><div class="vs2"></div><div class="id"><span>20</span></div><div class="nm"><span>BANGLADESH</span></div><div class="uf"><span>EX</span></div></div><div class="row" style="top:686px"><div class="vs"></div><div class="vs2"></div><div class="id"><span>21</span></div><div class="nm"><span>BARBADOS</span></div><div class="uf"><span>EX</span></div></div><div class="row" style="top:719px"><div class="vs"></div><div class="vs2"></div><div class="id"><span>22</span></div><div class="nm"><span>BELARUS, REPUBLICA DA</span></div><div class="uf"><span>EX</span></div></div><div class="row" style="top:752px"><div class="vs"></div><div class="vs2"></div><div class="id"><span>23</span></div><div class="nm"><span>BELGICA</span></div><div class="uf"><span>EX</span></div></div><div class="row" style="top:785px"><div class="vs"></div><div class="vs2"></div><div class="id"><span>24</span></div><div class="nm"><span>BELIZE</span></div><div class="uf"><span>EX</span></div></div><div class="row" style="top:818px"><div class="vs"></div><div class="vs2"></div><div class="id"><span>25</span></div><div class="nm"><span>BERMUDAS</span></div><div class="uf"><span>EX</span></div></div><div class="a" style="left:-2px;right:0;top:893px;height:2px;background:#fbfbfb"></div><div class="sb"><svg class="ar" viewBox="0 0 10 11"><path d="M8 1.2 L2.6 5.5 L8 9.8" fill="none" stroke="#606060" stroke-width="2.5"/></svg><div class="th"></div></div></div></div>
<div class="win" style="left:1479px;top:568px;width:902px;height:959px;z-index:14;box-shadow:0 0 14px rgba(0,0,0,.32)"><div class="tb"></div><div class="bl"></div><div class="bt"></div><div class="ico"><i></i><u></u><s></s><b></b></div><div class="ttl">JPATECNOLOGIA (JOSEQ) (PTESHWGUI) TESTE HWGUI</div><div class="tbl"><div class="hdr"><div class="ht" style="left:7px">IDCIDAD</div><div class="hs" style="left:94px"></div><div class="ht" style="left:103px">NOME</div><div class="hs" style="left:872.5px"></div><div class="ht" style="left:882px">UF</div></div><div class="row sel" style="top:26px"><div class="c1"></div><div class="c2"></div><div class="vs"></div><div class="vs2"></div><div class="id"><span>1</span></div><div class="nm"><span>AFEGANISTAO</span></div><div class="uf"><span>EX</span></div></div><div class="row" style="top:59px"><div class="vs"></div><div class="vs2"></div><div class="id"><span>2</span></div><div class="nm"><span>ALBANIA, REPUBLICA DA</span></div><div class="uf"><span>EX</span></div></div><div class="row" style="top:92px"><div class="vs"></div><div class="vs2"></div><div class="id"><span>3</span></div><div class="nm"><span>ALEMANHA</span></div><div class="uf"><span>EX</span></div></div><div class="row" style="top:125px"><div class="vs"></div><div class="vs2"></div><div class="id"><span>4</span></div><div class="nm"><span>BURKINA FASO</span></div><div class="uf"><span>EX</span></div></div><div class="row" style="top:158px"><div class="vs"></div><div class="vs2"></div><div class="id"><span>5</span></div><div class="nm"><span>ANDORRA</span></div><div class="uf"><span>EX</span></div></div><div class="row" style="top:191px"><div class="vs"></div><div class="vs2"></div><div class="id"><span>6</span></div><div class="nm"><span>ANGOLA</span></div><div class="uf"><span>EX</span></div></div><div class="row" style="top:224px"><div class="vs"></div><div class="vs2"></div><div class="id"><span>7</span></div><div class="nm"><span>ANGUILLA</span></div><div class="uf"><span>EX</span></div></div><div class="row" style="top:257px"><div class="vs"></div><div class="vs2"></div><div class="id"><span>8</span></div><div class="nm"><span>ANTIGUA E BARBUDA</span></div><div class="uf"><span>EX</span></div></div><div class="row" style="top:290px"><div class="vs"></div><div class="vs2"></div><div class="id"><span>9</span></div><div class="nm"><span>ANTILHAS HOLANDESAS</span></div><div class="uf"><span>EX</span></div></div><div class="row" style="top:323px"><div class="vs"></div><div class="vs2"></div><div class="id"><span>10</span></div><div class="nm"><span>ARABIA SAUDITA</span></div><div class="uf"><span>EX</span></div></div><div class="row" style="top:356px"><div class="vs"></div><div class="vs2"></div><div class="id"><span>11</span></div><div class="nm"><span>ARGELIA</span></div><div class="uf"><span>EX</span></div></div><div class="row" style="top:389px"><div class="vs"></div><div class="vs2"></div><div class="id"><span>12</span></div><div class="nm"><span>ARGENTINA</span></div><div class="uf"><span>EX</span></div></div><div class="row" style="top:422px"><div class="vs"></div><div class="vs2"></div><div class="id"><span>13</span></div><div class="nm"><span>ARMENIA, REPUBLICA DA</span></div><div class="uf"><span>EX</span></div></div><div class="row" style="top:455px"><div class="vs"></div><div class="vs2"></div><div class="id"><span>14</span></div><div class="nm"><span>ARUBA</span></div><div class="uf"><span>EX</span></div></div><div class="row" style="top:488px"><div class="vs"></div><div class="vs2"></div><div class="id"><span>15</span></div><div class="nm"><span>AUSTRALIA</span></div><div class="uf"><span>EX</span></div></div><div class="row" style="top:521px"><div class="vs"></div><div class="vs2"></div><div class="id"><span>16</span></div><div class="nm"><span>AUSTRIA</span></div><div class="uf"><span>EX</span></div></div><div class="row" style="top:554px"><div class="vs"></div><div class="vs2"></div><div class="id"><span>17</span></div><div class="nm"><span>AZERBAIJAO, REPUBLICA</span></div><div class="uf"><span>EX</span></div></div><div class="row" style="top:587px"><div class="vs"></div><div class="vs2"></div><div class="id"><span>18</span></div><div class="nm"><span>BAHAMAS, ILHAS</span></div><div class="uf"><span>EX</span></div></div><div class="row" style="top:620px"><div class="vs"></div><div class="vs2"></div><div class="id"><span>19</span></div><div class="nm"><span>BAHREIN, ILHAS</span></div><div class="uf"><span>EX</span></div></div><div class="row" style="top:653px"><div class="vs"></div><div class="vs2"></div><div class="id"><span>20</span></div><div class="nm"><span>BANGLADESH</span></div><div class="uf"><span>EX</span></div></div><div class="row" style="top:686px"><div class="vs"></div><div class="vs2"></div><div class="id"><span>21</span></div><div class="nm"><span>BARBADOS</span></div><div class="uf"><span>EX</span></div></div><div class="row" style="top:719px"><div class="vs"></div><div class="vs2"></div><div class="id"><span>22</span></div><div class="nm"><span>BELARUS, REPUBLICA DA</span></div><div class="uf"><span>EX</span></div></div><div class="row" style="top:752px"><div class="vs"></div><div class="vs2"></div><div class="id"><span>23</span></div><div class="nm"><span>BELGICA</span></div><div class="uf"><span>EX</span></div></div><div class="row" style="top:785px"><div class="vs"></div><div class="vs2"></div><div class="id"><span>24</span></div><div class="nm"><span>BELIZE</span></div><div class="uf"><span>EX</span></div></div><div class="row" style="top:818px"><div class="vs"></div><div class="vs2"></div><div class="id"><span>25</span></div><div class="nm"><span>BERMUDAS</span></div><div class="uf"><span>EX</span></div></div><div class="a" style="left:-2px;right:0;top:893px;height:2px;background:#fbfbfb"></div><div class="sb"><svg class="ar" viewBox="0 0 10 11"><path d="M8 1.2 L2.6 5.5 L8 9.8" fill="none" stroke="#606060" stroke-width="2.5"/></svg><div class="th"></div></div></div></div>
<div class="win act" style="left:1590px;top:691px;width:791px;height:959px;z-index:15;box-shadow:0 0 14px rgba(0,0,0,.32)"><div class="tb"></div><div class="bl"></div><div class="bt"></div><div class="ico"><i></i><u></u><s></s><b></b></div><div class="ttl">JPATECNOLOGIA (JOSEQ) (PTESHWGUI) TESTE HWGUI</div><div class="tbl"><div class="hdr"><div class="ht" style="left:7px">IDCIDAD</div><div class="hs" style="left:94px"></div><div class="ht" style="left:103px">NOME</div><div class="hs" style="left:872.5px"></div><div class="ht" style="left:882px">UF</div></div><div class="row sel" style="top:26px"><div class="c1"></div><div class="c2"></div><div class="vs"></div><div class="vs2"></div><div class="id"><span>1</span></div><div class="nm"><span>AFEGANISTAO</span></div><div class="uf"><span>EX</span></div></div><div class="row" style="top:59px"><div class="vs"></div><div class="vs2"></div><div class="id"><span>2</span></div><div class="nm"><span>ALBANIA, REPUBLICA DA</span></div><div class="uf"><span>EX</span></div></div><div class="row" style="top:92px"><div class="vs"></div><div class="vs2"></div><div class="id"><span>3</span></div><div class="nm"><span>ALEMANHA</span></div><div class="uf"><span>EX</span></div></div><div class="row" style="top:125px"><div class="vs"></div><div class="vs2"></div><div class="id"><span>4</span></div><div class="nm"><span>BURKINA FASO</span></div><div class="uf"><span>EX</span></div></div><div class="row" style="top:158px"><div class="vs"></div><div class="vs2"></div><div class="id"><span>5</span></div><div class="nm"><span>ANDORRA</span></div><div class="uf"><span>EX</span></div></div><div class="row" style="top:191px"><div class="vs"></div><div class="vs2"></div><div class="id"><span>6</span></div><div class="nm"><span>ANGOLA</span></div><div class="uf"><span>EX</span></div></div><div class="row" style="top:224px"><div class="vs"></div><div class="vs2"></div><div class="id"><span>7</span></div><div class="nm"><span>ANGUILLA</span></div><div class="uf"><span>EX</span></div></div><div class="row" style="top:257px"><div class="vs"></div><div class="vs2"></div><div class="id"><span>8</span></div><div class="nm"><span>ANTIGUA E BARBUDA</span></div><div class="uf"><span>EX</span></div></div><div class="row" style="top:290px"><div class="vs"></div><div class="vs2"></div><div class="id"><span>9</span></div><div class="nm"><span>ANTILHAS HOLANDESAS</span></div><div class="uf"><span>EX</span></div></div><div class="row" style="top:323px"><div class="vs"></div><div class="vs2"></div><div class="id"><span>10</span></div><div class="nm"><span>ARABIA SAUDITA</span></div><div class="uf"><span>EX</span></div></div><div class="row" style="top:356px"><div class="vs"></div><div class="vs2"></div><div class="id"><span>11</span></div><div class="nm"><span>ARGELIA</span></div><div class="uf"><span>EX</span></div></div><div class="row" style="top:389px"><div class="vs"></div><div class="vs2"></div><div class="id"><span>12</span></div><div class="nm"><span>ARGENTINA</span></div><div class="uf"><span>EX</span></div></div><div class="row" style="top:422px"><div class="vs"></div><div class="vs2"></div><div class="id"><span>13</span></div><div class="nm"><span>ARMENIA, REPUBLICA DA</span></div><div class="uf"><span>EX</span></div></div><div class="row" style="top:455px"><div class="vs"></div><div class="vs2"></div><div class="id"><span>14</span></div><div class="nm"><span>ARUBA</span></div><div class="uf"><span>EX</span></div></div><div class="row" style="top:488px"><div class="vs"></div><div class="vs2"></div><div class="id"><span>15</span></div><div class="nm"><span>AUSTRALIA</span></div><div class="uf"><span>EX</span></div></div><div class="row" style="top:521px"><div class="vs"></div><div class="vs2"></div><div class="id"><span>16</span></div><div class="nm"><span>AUSTRIA</span></div><div class="uf"><span>EX</span></div></div><div class="row" style="top:554px"><div class="vs"></div><div class="vs2"></div><div class="id"><span>17</span></div><div class="nm"><span>AZERBAIJAO, REPUBLICA</span></div><div class="uf"><span>EX</span></div></div><div class="row" style="top:587px"><div class="vs"></div><div class="vs2"></div><div class="id"><span>18</span></div><div class="nm"><span>BAHAMAS, ILHAS</span></div><div class="uf"><span>EX</span></div></div><div class="row" style="top:620px"><div class="vs"></div><div class="vs2"></div><div class="id"><span>19</span></div><div class="nm"><span>BAHREIN, ILHAS</span></div><div class="uf"><span>EX</span></div></div><div class="row" style="top:653px"><div class="vs"></div><div class="vs2"></div><div class="id"><span>20</span></div><div class="nm"><span>BANGLADESH</span></div><div class="uf"><span>EX</span></div></div><div class="row" style="top:686px"><div class="vs"></div><div class="vs2"></div><div class="id"><span>21</span></div><div class="nm"><span>BARBADOS</span></div><div class="uf"><span>EX</span></div></div><div class="row" style="top:719px"><div class="vs"></div><div class="vs2"></div><div class="id"><span>22</span></div><div class="nm"><span>BELARUS, REPUBLICA DA</span></div><div class="uf"><span>EX</span></div></div><div class="row" style="top:752px"><div class="vs"></div><div class="vs2"></div><div class="id"><span>23</span></div><div class="nm"><span>BELGICA</span></div><div class="uf"><span>EX</span></div></div><div class="row" style="top:785px"><div class="vs"></div><div class="vs2"></div><div class="id"><span>24</span></div><div class="nm"><span>BELIZE</span></div><div class="uf"><span>EX</span></div></div><div class="row" style="top:818px"><div class="vs"></div><div class="vs2"></div><div class="id"><span>25</span></div><div class="nm"><span>BERMUDAS</span></div><div class="uf"><span>EX</span></div></div><div class="a" style="left:-2px;right:0;top:893px;height:2px;background:#fbfbfb"></div><div class="sb"><svg class="ar" viewBox="0 0 10 11"><path d="M8 1.2 L2.6 5.5 L8 9.8" fill="none" stroke="#606060" stroke-width="2.5"/></svg><div class="th"></div></div></div></div>
<div class="a" style="left:0;top:1548.6px;width:2371px;height:27px;z-index:50;background:linear-gradient(90deg,#3b3430 0%,#433b35 35%,#46403b 55%,#47433f 68%,#474747 82%,#474747 100%)">
<div class="a" style="left:114px;top:0;width:66px;height:27px;background:#625b55"></div>
<div class="a" style="left:180px;top:0;width:7px;height:27px;background:#4e4843"></div>
<svg class="a" style="left:0;top:13px" width="20" height="14"><path d="M0 1.2H7.5V6" fill="none" stroke="#1ea0e8" stroke-width="2"/><rect x="0" y="5" width="17" height="9" rx="1" fill="#f2f2f2"/><rect x="0" y="12" width="7" height="2" fill="#6cb030"/></svg>
<svg class="a" style="left:58px;top:16px" width="33" height="11"><rect x="0.5" y="0.5" width="32" height="11" fill="#c8c8c8"/><rect x="2" y="3" width="29" height="8" fill="#111"/><text x="4" y="10" font-size="7" fill="#ddd" font-family="Liberation Mono">C:\_</text></svg>
<svg class="a" style="left:132px;top:13px" width="36" height="14"><rect width="36" height="14" fill="#3f48d0"/><path d="M3 6H7V14H3Z M10 6H15V14H10Z M22 6H26L30 14H20Z" fill="#fff"/></svg>
<svg class="a" style="left:2298px;top:13px" width="22" height="14"><path d="M6 1 Q14 4 13 12 L5 12 Q9 6 6 1Z" fill="#f8c000"/><ellipse cx="12" cy="13" rx="8" ry="4" fill="#bfe0f4"/></svg>
<div class="a" style="left:2347px;top:24px;font-size:14px;line-height:14px;color:#fff">17°</div>
</div></body></html>
